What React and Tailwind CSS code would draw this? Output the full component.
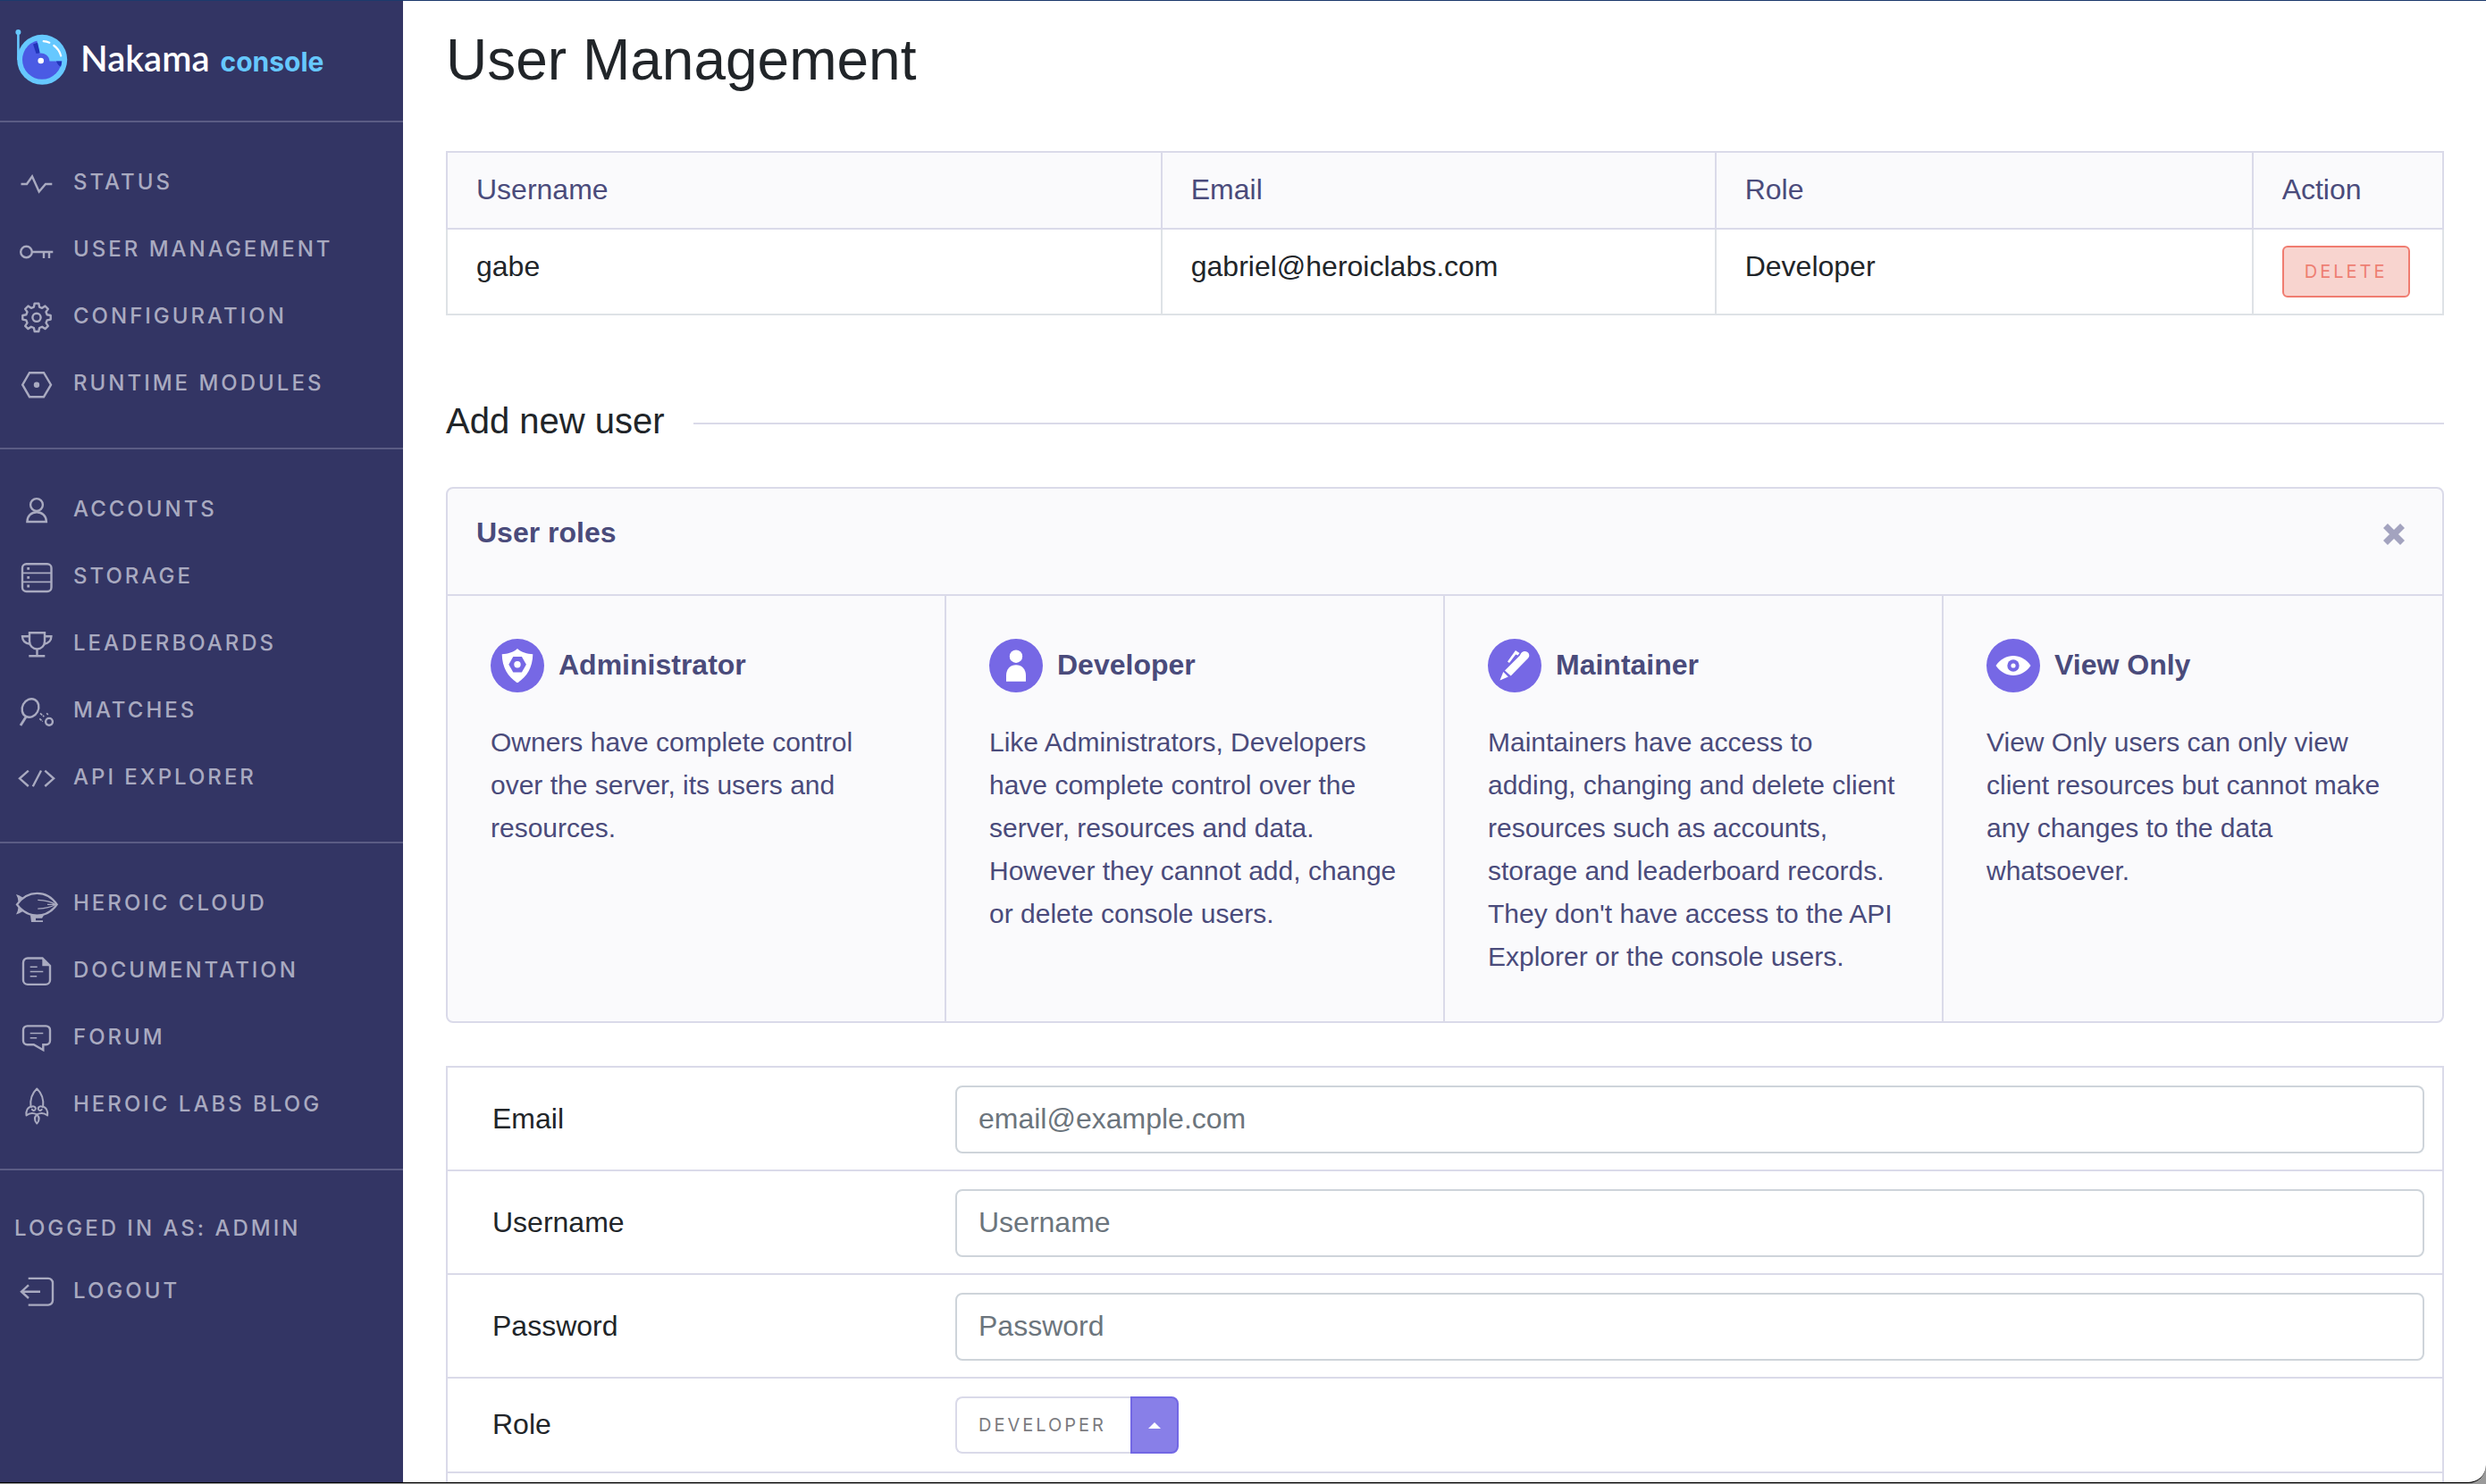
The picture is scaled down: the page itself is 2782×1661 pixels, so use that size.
import React from "react";

function Icon({ children }) {
  return (
    <span className="flex w-[82px] shrink-0 justify-center">
      <svg
        width="48"
        height="48"
        viewBox="0 0 48 48"
        fill="none"
        stroke="currentColor"
        strokeWidth="2.4"
        aria-hidden="true"
      >
        {children}
      </svg>
    </span>
  );
}

const StatusIcon = () => (
  <Icon>
    <path d="M6.5 26H13l6-8.5 7.7 17L34 26h7.3" />
  </Icon>
);

const KeyIcon = () => (
  <Icon>
    <circle cx="12.5" cy="27" r="6.3" />
    <path d="M19 27h23.3M32 27v7M38 27v7" />
  </Icon>
);

const GearIcon = () => (
  <Icon>
    <path
      strokeLinejoin="round"
      d="M21.7 9.6h4.6l.8 4 3 1.2 3.4-2.3 3.3 3.3-2.3 3.4 1.2 3 4 .8v4.6l-4 .8-1.2 3 2.3 3.4-3.3 3.3-3.4-2.3-3 1.2-.8 4h-4.6l-.8-4-3-1.2-3.4 2.3-3.3-3.3 2.3-3.4-1.2-3-4-.8V23l4-.8 1.2-3-2.3-3.4 3.3-3.3 3.4 2.3 3-1.2z"
    />
    <circle cx="24" cy="25.3" r="4.6" />
  </Icon>
);

const HexIcon = () => (
  <Icon>
    <path d="M16 12.2h16l8 13.5-8 13.5H16L8.2 25.7z" />
    <circle cx="24" cy="25.8" r="3.2" fill="currentColor" stroke="none" />
  </Icon>
);

const PersonIcon = () => (
  <Icon>
    <circle cx="24" cy="19" r="6.9" />
    <path d="M13.4 38c0-6.500 4.800-10.800 10.700-10.800S34.900 31.500 34.900 38z" />
  </Icon>
);

const StorageIcon = () => (
  <Icon>
    <rect x="8" y="10.200" width="32.500" height="30.800" rx="4.500" />
    <path d="M8 20.300h32.500M8 30.300h32.500" strokeWidth="1.800" />
    <path d="M13.300 15.400h2.800M13.300 25.400h2.800M13.300 35h2.800" strokeWidth="2.800" />
  </Icon>
);

const TrophyIcon = () => (
  <Icon>
    <path d="M16 12.300h17v9.500c0 5-3.800 8.700-8.500 8.700S16 26.800 16 21.800z" />
    <path d="M16 16.300H8c0 4.500 3 8 8.600 8.500M33 16.300h7.400c0 4.500-3 8-8.200 8.500M24.500 30.500V38M15.300 38.300h18" />
  </Icon>
);

const RacketIcon = () => (
  <Icon>
    <ellipse cx="17" cy="21.500" rx="9" ry="10.600" transform="rotate(28 17 21.500)" />
    <path d="M12.300 31 6 41" strokeWidth="2.800" />
    <circle cx="38" cy="36.800" r="3.900" />
    <path d="m28 27.300 4.300 3.800M27.300 33.300l3.500 3.200M35.200 27.200l1.600 1.800" strokeWidth="1.600" strokeDasharray="3 1" />
  </Icon>
);

const CodeIcon = () => (
  <Icon>
    <path d="M14.800 16.700 5 25.300l9.800 8.700M29 16.500 19.800 34.200M33.300 16.700l9.800 8.600-9.800 8.700" />
  </Icon>
);

const BlimpIcon = () => (
  <Icon>
    <path d="M2 25.400C8 17 16 12.900 24.500 12.900S41 17 46.600 25.400C41 33.500 33 37.600 24.500 37.600S8 33.500 2 25.400z" />
    <path
      d="M1 14l3.500 1.200L10 18.500 3.500 22.300 2.800 18zM1 36.500l3.500-1.200L10 32.200 3.500 28.500 2.800 32.500zM17 37.500h15l-2 3.200h-7v2.600h8v1.700H18z"
      fill="currentColor"
      stroke="none"
    />
    <path d="M25.300 20.400c8 .4 15 2 20 5M25.300 30.200c8-.4 15-2 20-5M36 25.300h9" strokeWidth="1.200" />
  </Icon>
);

const DocIcon = () => (
  <Icon>
    <path d="M30.500 10.500H14a5 5 0 0 0-5 5v19.400a5 5 0 0 0 5 5h20a5 5 0 0 0 5-5V19z" />
    <path d="M30.300 10v9.200h9.200z" fill="currentColor" stroke="none" />
    <path d="M16.700 20.200h8M16.700 25.500h14.600M16.700 30.800h7.500" strokeWidth="1.400" />
  </Icon>
);

const ForumIcon = () => (
  <Icon>
    <path d="M13.500 11.400h21a4.500 4.500 0 0 1 4.500 4.500v11.800a4.500 4.500 0 0 1-4.500 4.500h-3.200v6l-10.500-6h-7.300A4.500 4.500 0 0 1 9 27.700V15.900a4.500 4.500 0 0 1 4.500-4.500z" />
    <path d="M16.700 19.500h14.600M16.700 24.800h7.500" strokeWidth="1.400" />
  </Icon>
);

const RocketIcon = () => (
  <Icon>
    <path
      strokeWidth="2"
      strokeLinejoin="round"
      d="M17.500 27.500C16.300 19 19 11.500 24.300 6.500c5.300 5 8 12.500 6.800 21M17.500 27.500c2.500-2.500 6-.5 5.200 2-.8 2.300-4 1.600-3.700-.5M31.100 27.500c-2.500-2.500-6-.5-5.200 2 .8 2.300 4 1.600 3.700-.5M17.500 26.500c-4 1.300-5.500 5-5 10 3.300-2.700 7.500-3.500 11.800-1 4.300-2.500 8.500-1.700 11.800 1 .5-5-1-8.700-5-10M24.300 35.500c-3.200 3.200-3.200 6.500 0 10 3.200-3.500 3.200-6.800 0-10z"
    />
  </Icon>
);

const LogoutIcon = () => (
  <Icon>
    <path d="M14.700 9.900H37a5 5 0 0 1 5 5v19.700a5 5 0 0 1-5 5H14.700M28 24.700H7M15 17.400l-8 7.300 8 7.300" />
  </Icon>
);

const groups = [
  [
    ["Status", StatusIcon],
    ["User Management", KeyIcon],
    ["Configuration", GearIcon],
    ["Runtime Modules", HexIcon],
  ],
  [
    ["Accounts", PersonIcon],
    ["Storage", StorageIcon],
    ["Leaderboards", TrophyIcon],
    ["Matches", RacketIcon],
    ["API Explorer", CodeIcon],
  ],
  [
    ["Heroic Cloud", BlimpIcon],
    ["Documentation", DocIcon],
    ["Forum", ForumIcon],
    ["Heroic Labs Blog", RocketIcon],
  ],
];

function Logo() {
  return (
    <svg width="62" height="66" viewBox="16 31 62 66" aria-hidden="true">
      <path d="M20.400 36v31" stroke="#66c8ff" strokeWidth="2.600" />
      <circle cx="20.400" cy="36" r="3" fill="#66c8ff" />
      <circle cx="47.200" cy="66.800" r="28" fill="#66c8ff" />
      <circle cx="47" cy="66.800" r="22" fill="#4a5be4" />
      <path d="M41 44 44.300 59.500a9.800 9.800 0 0 1 11.200 9H70A23 23 0 0 0 41 44z" fill="#66c8ff" />
      <path d="M37 49.500 42 47.800 44.700 59.300 40.500 60z" fill="#2134b8" />
      <path d="M63 68.500h6.300a22 22 0 0 1-1.300 6.200c-2-1-4-3-5-6.200z" fill="#2134b8" />
      <circle cx="45.700" cy="68" r="3.300" fill="#fff" />
      <path d="M48.700 46.200c2.400.1 4.600.6 6.600 1.500M60.300 51c4 2.800 6.700 6.800 7.900 11.500" stroke="#fff" strokeWidth="2.200" strokeLinecap="round" fill="none" />
    </svg>
  );
}

function Sidebar() {
  return (
    <aside className="w-[451px] shrink-0 bg-[#333564] font-['Inter',sans-serif] text-2xl font-medium tracking-[3px] text-[#a9aac0] uppercase">
      <a href="#home" className="flex h-[134px] items-start gap-3 pt-[30px] pl-4 tracking-normal normal-case">
        <Logo />
        <span className="flex items-baseline gap-3 pt-[10px]">
          <span className="font-['Lato',sans-serif] text-[40px] leading-[48px] font-semibold text-white">Nakama</span>
          <span className="text-[30px] leading-[48px] font-bold text-[#66c8ff]">console</span>
        </span>
      </a>
      <nav>
        {groups.map((items, i) => (
          <ul key={i} className="border-t-2 border-[#5b5c84] pt-[29px] pb-[35px]">
            {items.map(([label, Glyph]) => (
              <li key={label}>
                <a href={"#" + label.toLowerCase().replace(/ /g, "-")} className="flex h-[75px] items-center">
                  <Glyph />
                  <span>{label}</span>
                </a>
              </li>
            ))}
          </ul>
        ))}
      </nav>
      <div className="border-t-2 border-[#5b5c84] pt-[30px]">
        <p className="flex h-[70px] items-center pl-4">Logged in as: admin</p>
        <button type="button" className="flex h-[70px] items-center uppercase tracking-[3px]">
          <LogoutIcon />
          <span>Logout</span>
        </button>
      </div>
    </aside>
  );
}

function Badge({ children }) {
  return (
    <svg width="60" height="60" viewBox="0 0 60 60" fill="#fff" className="shrink-0" aria-hidden="true">
      <circle cx="30" cy="30" r="30" fill="#7668e5" />
      {children}
    </svg>
  );
}

const roles = [
  {
    name: "Administrator",
    text: "Owners have complete control over the server, its users and resources.",
    badge: (
      <Badge>
        <path d="M30 11c4.500 4 11 6 17.300 6.300C47 32 40.500 43 30 49.300 19.500 43 13 32 12.700 17.300 19 17 25.500 15 30 11z" />
        <path d="M25.300 20h9.600l5 8.700-5 8.800h-9.600l-5-8.800z" fill="#7668e5" />
        <circle cx="30" cy="28.700" r="3.700" />
      </Badge>
    ),
  },
  {
    name: "Developer",
    text: "Like Administrators, Developers have complete control over the server, resources and data. However they cannot add, change or delete console users.",
    badge: (
      <Badge>
        <circle cx="30" cy="19.700" r="7.200" />
        <path d="M19 47.800V41c0-7 4.500-11.700 11-11.700S41 34 41 41v6.800z" />
      </Badge>
    ),
  },
  {
    name: "Maintainer",
    text: "Maintainers have access to adding, changing and delete client resources such as accounts, storage and leaderboard records. They don't have access to the API Explorer or the console users.",
    badge: (
      <Badge>
        <path d="M19 35.500 35.500 19l1.800-3c2.500-3 7-2.500 8.500.5 1 2 .5 4-1 5.500L25.700 41.500z" />
        <path d="M17.300 37l5.500 5.600-9.300 4z" />
        <path d="M22 25.500 31 13l4.500 3-2 2.500-2.300-1-7.200 9.500z" />
      </Badge>
    ),
  },
  {
    name: "View Only",
    text: "View Only users can only view client resources but cannot make any changes to the data whatsoever.",
    badge: (
      <Badge>
        <path d="M10.500 30C16 22.500 22.500 19 30 19s14 3.500 19.500 11C44 37.500 37.500 41 30 41s-14-3.500-19.500-11z" />
        <circle cx="30" cy="30" r="6.700" fill="#7668e5" />
        <circle cx="30" cy="30" r="2.600" />
      </Badge>
    ),
  },
];

const th = "border-2 border-[#dadae9] px-8 pt-[17px] pb-[19px] text-left font-normal";
const td = "border-2 border-[#dee2e6] px-8 pt-[17px] pb-[18px] align-top";

function UsersTable() {
  return (
    <table className="mt-[70px] w-full table-fixed border-collapse leading-[48px]">
      <thead className="bg-[#fafafc] text-[#4a4b7b]">
        <tr>
          <th scope="col" className={"w-[35.8%] " + th}>Username</th>
          <th scope="col" className={"w-[27.75%] " + th}>Email</th>
          <th scope="col" className={"w-[26.9%] " + th}>Role</th>
          <th scope="col" className={th}>Action</th>
        </tr>
      </thead>
      <tbody>
        <tr>
          <td className={td}>gabe</td>
          <td className={td}>gabriel@heroiclabs.com</td>
          <td className={td}>Developer</td>
          <td className={td}>
            <button
              type="button"
              className="mt-px flex h-[58px] w-[143px] items-center justify-center rounded-md border-2 border-[#f07c70] bg-[#f8d4cf] font-['Inter',sans-serif] text-xl leading-none tracking-[3px] text-[#ee7f73]"
            >
              DELETE
            </button>
          </td>
        </tr>
      </tbody>
    </table>
  );
}

function RolesPanel() {
  return (
    <section className="mt-11 rounded-lg border-2 border-[#dadae9] bg-[#fafafc] text-[#4a4b7b]">
      <header className="flex h-[120px] items-start justify-between border-b-2 border-[#dadae9] pt-[25px] pr-10 pl-8">
        <h3 className="leading-[48px] font-bold">User roles</h3>
        <button type="button" aria-label="Close" className="flex h-[52px] items-center">
          <svg width="28" height="28" viewBox="0 0 28 28" aria-hidden="true">
            <path d="M4.500 4.500l19 19M23.500 4.500l-19 19" stroke="#a3a3bf" strokeWidth="7" />
          </svg>
        </button>
      </header>
      <div className="grid grid-cols-4 divide-x-2 divide-[#dadae9]">
        {roles.map((role) => (
          <article key={role.name} className="p-12">
            <h4 className="flex items-center gap-4 font-bold">
              {role.badge}
              <span className="pb-[2px]">{role.name}</span>
            </h4>
            <p className="mt-8 text-3xl leading-[48px]">{role.text}</p>
          </article>
        ))}
      </div>
    </section>
  );
}

const fields = [
  { id: "email", label: "Email", type: "email", placeholder: "email@example.com" },
  { id: "username", label: "Username", type: "text", placeholder: "Username" },
  { id: "password", label: "Password", type: "password", placeholder: "Password" },
];

const row = "grid grid-cols-[518px_1fr] items-center border-b-2 border-[#dadae9] pr-5 pl-[50px]";

function UserForm() {
  return (
    <form className="mt-12 border-2 border-[#dadae9]">
      {fields.map((f) => (
        <div key={f.id} className={row + " pt-5 pb-[18px]"}>
          <label htmlFor={f.id} className="pb-[2px]">{f.label}</label>
          <input
            id={f.id}
            type={f.type}
            placeholder={f.placeholder}
            className="h-[76px] w-full rounded-lg border-2 border-[#ced4da] bg-white px-6 pb-[2px] placeholder:text-[#6c757d]"
          />
        </div>
      ))}
      <div className={row + " py-5"}>
        <label htmlFor="role" className="pb-[2px]">Role</label>
        <div className="flex h-16">
          <select
            id="role"
            defaultValue="Developer"
            className="w-[196px] appearance-none rounded-l-lg border-2 border-r-0 border-[#dadae9] bg-white pl-6 font-['Inter',sans-serif] text-xl tracking-[3px] text-[#7b7b80] uppercase"
          >
            {roles.map((r) => (
              <option key={r.name}>{r.name}</option>
            ))}
          </select>
          <button
            type="button"
            aria-label="Toggle role list"
            className="flex w-[54px] items-center justify-center rounded-r-lg border-2 border-[#7267e4] bg-[#887fe8]"
          >
            <svg width="14" height="7" viewBox="0 0 14 7" aria-hidden="true">
              <path d="M0 7 7 0l7 7z" fill="#fff" />
            </svg>
          </button>
        </div>
      </div>
      <div className="h-24" />
    </form>
  );
}

export default function App() {
  return (
    <div className="h-screen bg-[#9a9a9a] pb-px">
      <div className="flex h-full overflow-hidden rounded-br-[20px] border-t border-b border-t-[#1c3a6c] border-b-black bg-white font-['Liberation_Sans',Arial,sans-serif] text-[32px] text-[#212529]">
        <Sidebar />
        <main className="min-w-0 flex-1 pt-[34px] pr-[47px] pl-12">
          <h1 className="text-[64px] leading-[64px]">User Management</h1>
          <UsersTable />
          <div className="mt-[94px] flex items-center gap-8">
            <h2 className="pb-[6px] text-[40px] leading-[48px]">Add new user</h2>
            <div className="h-[2px] flex-1 bg-[#dadae9]" />
          </div>
          <RolesPanel />
          <UserForm />
        </main>
      </div>
    </div>
  );
}
